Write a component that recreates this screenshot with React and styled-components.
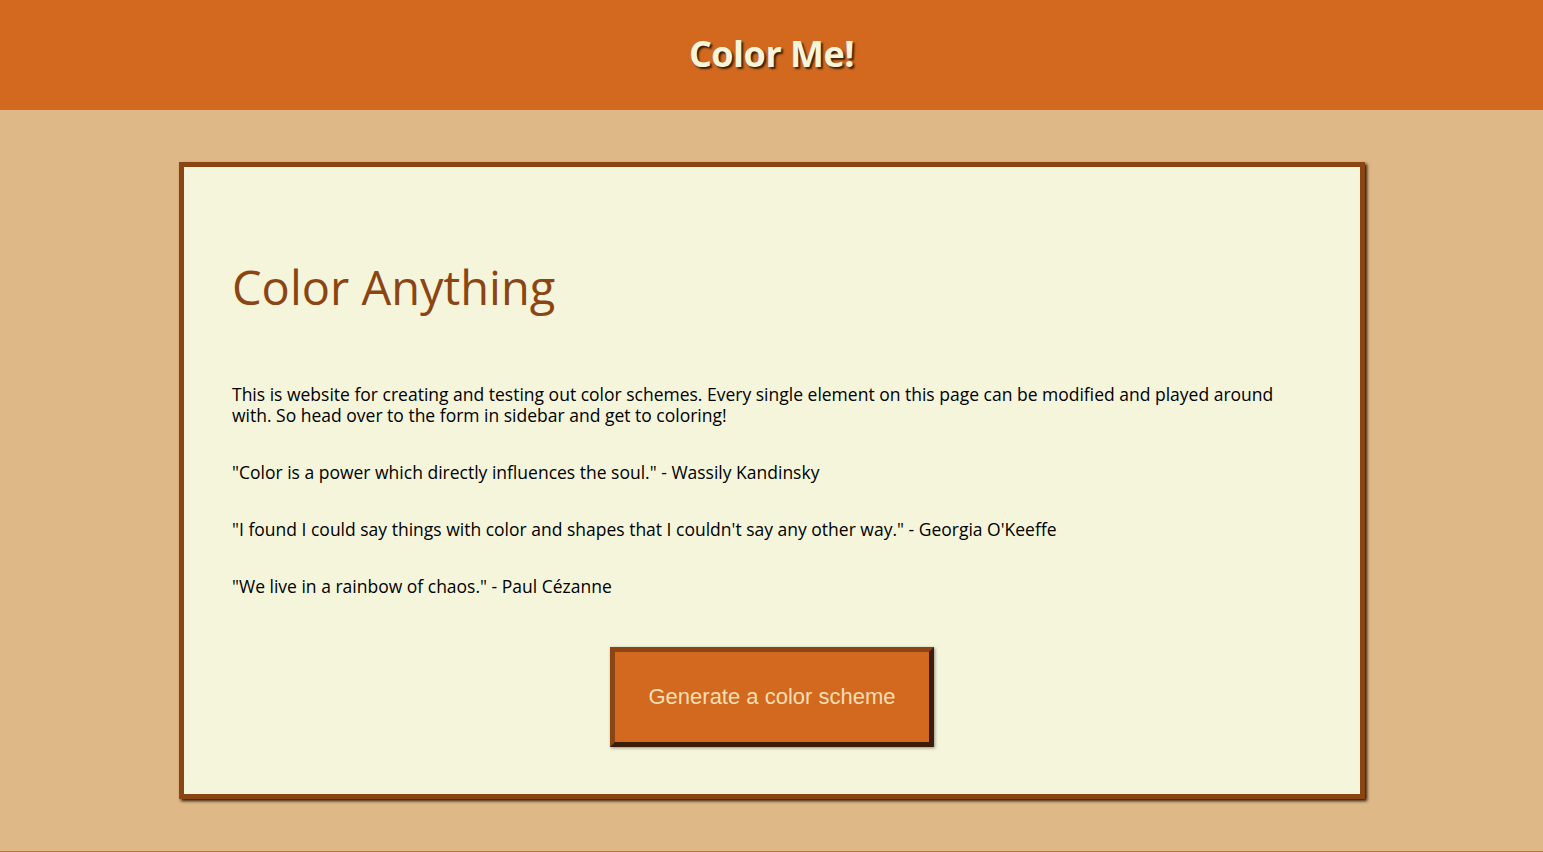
import React from "react";
import styled, { createGlobalStyle } from "styled-components";

const Global = createGlobalStyle`
  html, body { margin: 0; padding: 0; }
  body {
    background: #deb887;
    font-family: "Open Sans", "DejaVu Sans", sans-serif;
    color: #000;
  }
`;

const Header = styled.header`
  background: #d2691e;
  height: 110px;
  display: flex;
  align-items: center;
  justify-content: center;
`;

const SiteTitle = styled.h1`
  margin: 0 0 3px;
  font-size: 36px;
  font-weight: 700;
  color: #f5f5dc;
  text-shadow: 2px 2px 2px #3b1d08;
  letter-spacing: -0.5px;
`;

const Main = styled.main`
  padding: 52px 178px 52px 179px;
`;

const Card = styled.section`
  background: #f5f5dc;
  border: 5px solid #8b4513;
  box-shadow: 2px 2px 3px #2a1405;
  padding: 48px 48px 47px;
  display: flex;
  flex-direction: column;
`;

const Heading = styled.h2`
  margin: 44px 0 69px;
  font-size: 47px;
  font-weight: 400;
  color: #8b4513;
  line-height: 1.2;
`;

const Para = styled.p`
  margin: 0 0 36px;
  max-width: 1050px;
  font-size: 17.5px;
  line-height: 21px;
`;

const Button = styled.button`
  align-self: center;
  margin-top: 14px;
  background: #d2691e;
  color: #f5deb3;
  border-width: 5px;
  border-style: solid;
  border-color: #8b4513 #3b1d08 #3b1d08 #8b4513;
  box-shadow: 1px 1px 3px rgba(0, 0, 0, 0.4);
  font-family: "Liberation Sans", Arial, sans-serif;
  font-size: 22px;
  padding: 32px 33px;
  cursor: pointer;
`;

const Footer = styled.footer`
  background: #d2691e;
  height: 40px;
`;

export default function App() {
  return (
    <>
      <Global />
      <Header>
        <SiteTitle>Color Me!</SiteTitle>
      </Header>
      <Main>
        <Card>
          <Heading>Color Anything</Heading>
          <Para>
            This is website for creating and testing out color schemes. Every single element on this page can be modified and played around with. So head over to the form in sidebar and get to coloring!
          </Para>
          <Para>"Color is a power which directly influences the soul." - Wassily Kandinsky</Para>
          <Para>"I found I could say things with color and shapes that I couldn't say any other way." - Georgia O'Keeffe</Para>
          <Para>"We live in a rainbow of chaos." - Paul Cézanne</Para>
          <Button>Generate a color scheme</Button>
        </Card>
      </Main>
      <Footer />
    </>
  );
}
